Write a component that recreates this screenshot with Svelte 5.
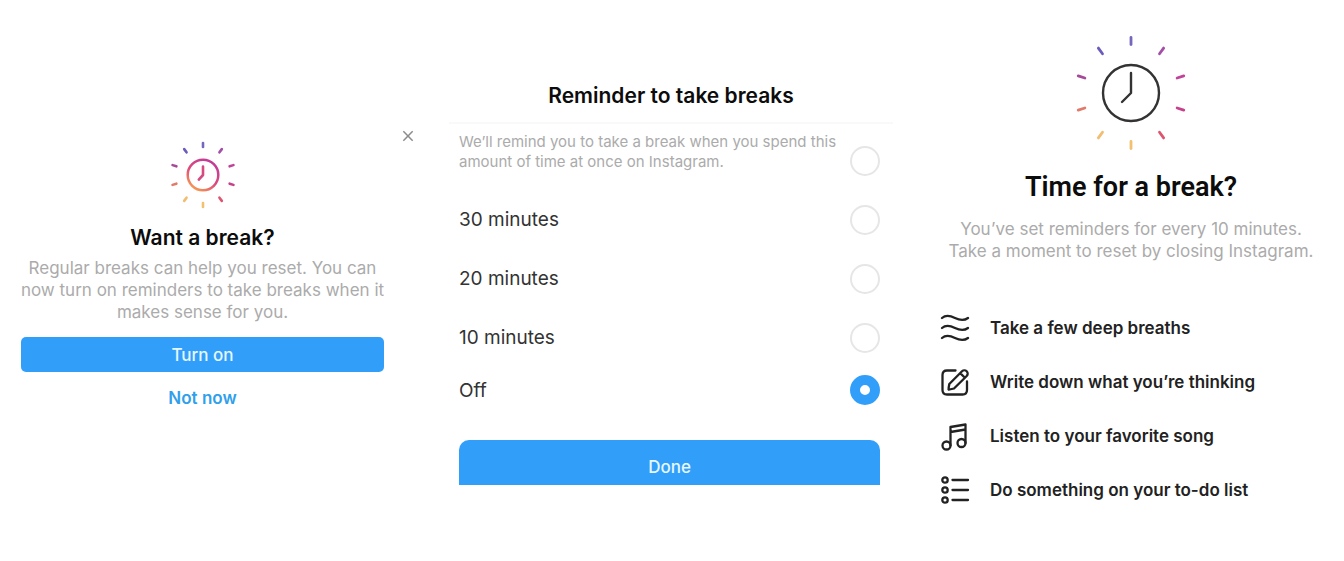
<script>
  // Clockwise from the ray pointing straight up.
  const rayColors = ['#7468bd', '#a34fa8', '#bf4499', '#c7408b', '#dd5570', '#f3c070', '#f1bd70', '#e07a6b', '#a54a98', '#6c5bbd'];
  const options = ['30 minutes', '20 minutes', '10 minutes', 'Off'];
  const ideas = [
    { icon: 'waves', text: 'Take a few deep breaths' },
    { icon: 'pencil', text: 'Write down what you’re thinking' },
    { icon: 'music', text: 'Listen to your favorite song' },
    { icon: 'list', text: 'Do something on your to-do list' }
  ];
  let selected = $state('Off');
</script>

<main>
  <section class="prompt">
    <svg class="sun-small" viewBox="-34 -34 68 68" fill="none" stroke-linecap="round" stroke-linejoin="round" aria-hidden="true">
      <defs>
        <linearGradient id="warm" gradientUnits="userSpaceOnUse" x1="10" y1="-14" x2="-8" y2="15">
          <stop offset="0" stop-color="#c13a98" />
          <stop offset="0.55" stop-color="#dc4a7c" />
          <stop offset="1" stop-color="#f79a52" />
        </linearGradient>
      </defs>
      {#each rayColors as color, i}
        <path d="M0-32V-28" stroke={color} stroke-width="2.6" transform="rotate({i * 36})" />
      {/each}
      <circle r="15.3" stroke="url(#warm)" stroke-width="2.5" />
      <path d="M0-8.5V0L-4.2 4.6" stroke="#d64a82" stroke-width="2.6" />
    </svg>
    <button class="close" aria-label="Close">
      <svg viewBox="0 0 12 12" aria-hidden="true"><path d="M2 2l8 8M10 2l-8 8" stroke="#8c8c8c" stroke-width="1.3" /></svg>
    </button>
    <h2>Want a break?</h2>
    <p>Regular breaks can help you reset. You can now turn on reminders to take breaks when it makes sense for you.</p>
    <button class="primary">Turn on</button>
    <button class="link">Not now</button>
  </section>

  <section class="reminder">
    <h2>Reminder to take breaks</h2>
    <div class="options">
      <label class="option hint">
        <span>We’ll remind you to take a break when you spend this amount of time at once on Instagram.</span>
        <input type="radio" name="reminder" value="custom" bind:group={selected} />
      </label>
      {#each options as option}
        <label class="option" class:last={option === 'Off'}>
          <span>{option}</span>
          <input type="radio" name="reminder" value={option} bind:group={selected} />
        </label>
      {/each}
      <button class="primary done">Done</button>
    </div>
  </section>

  <section class="break">
    <svg class="sun-large" viewBox="-58 -58 116 116" fill="none" stroke-linecap="round" stroke-linejoin="round" aria-hidden="true">
      {#each rayColors as color, i}
        <path d="M0-55.5V-48.5" stroke={color} stroke-width="2.8" transform="rotate({i * 36})" />
      {/each}
      <circle r="28" stroke="#333" stroke-width="2.4" />
      <path d="M0-20V0L-9 9" stroke="#333" stroke-width="2.4" />
    </svg>
    <h1>Time for a break?</h1>
    <p>You’ve set reminders for every 10 minutes. Take a moment to reset by closing Instagram.</p>
    <ul>
      {#each ideas as idea}
        <li>
          <svg viewBox="0 0 30 30" fill="none" stroke="#222" stroke-width="2.3" stroke-linecap="round" stroke-linejoin="round" aria-hidden="true">
            {#if idea.icon === 'waves'}
              {#each [5, 15, 25] as y}
                <path d="M2 {y}C6 {y - 3.5} 10 {y - 2.5} 15 {y}S24 {y + 3} 28 {y}" />
              {/each}
            {:else if idea.icon === 'pencil'}
              <path d="M15.5 3.5H7Q2.500 3.500 2.500 8V23Q2.500 27.500 7 27.500H22.500Q27 27.500 27 23V14.500" />
              <path d="M8.500 21.800L9.300 17L22 4.300A3.300 3.300 0 0 1 26.700 9L14 21.500L9.500 22.500Q8.300 22.800 8.500 21.800ZM20.200 6.100L24.900 10.800" />
            {:else if idea.icon === 'music'}
              <circle cx="6.500" cy="24.500" r="4" />
              <circle cx="21.500" cy="22" r="4" />
              <path d="M10.500 24.500V6L25.500 3.500V22M10.500 11L25.500 8.500" />
            {:else}
              {#each [5, 15, 25] as y}
                <circle cx="5" cy={y} r="2.700" />
                <path d="M12.500 {y}H28" />
              {/each}
            {/if}
          </svg>
          <span>{idea.text}</span>
        </li>
      {/each}
    </ul>
  </section>
</main>

<style>
  :global(body) {
    margin: 0;
    background: #fff;
  }
  main {
    display: grid;
    grid-template-columns: 415fr 444fr 408fr;
    column-gap: 34px;
    align-items: start;
    padding-right: 9px;
    font-family: Inter, "Liberation Sans", sans-serif;
    color: #262626;
  }
  h1, h2, p, ul {
    margin: 0;
    padding: 0;
  }
  h1, h2 {
    color: #0c0c0c;
    text-align: center;
    font-weight: 600;
  }
  button {
    border: 0;
    padding: 0;
    background: none;
    font: inherit;
    cursor: pointer;
  }
  p {
    color: #ababab;
    font-size: 17px;
    line-height: 22px;
    text-align: center;
  }
  .primary {
    background: #319ffa;
    color: #e6f7ff;
    font-size: 17px;
    font-weight: 500;
  }

  .prompt {
    display: grid;
    grid-template-columns: 1fr 31px;
    padding: 129px 0 0 21px;
  }
  .prompt > :not(.close) {
    grid-column: 1;
  }
  .sun-small {
    width: 68px;
    height: 68px;
    margin-top: 12px;
    justify-self: center;
  }
  .close {
    grid-column: 2;
    grid-row: 1;
    width: 14px;
    height: 14px;
    justify-self: end;
    align-self: start;
  }
  .close svg {
    display: block;
    width: 14px;
    height: 14px;
  }
  h2 {
    font-size: 21px;
    line-height: 28px;
  }
  .prompt h2 {
    margin-top: 15px;
  }
  .prompt p {
    margin: 5px -6px 0;
  }
  .prompt .primary {
    height: 35px;
    margin-top: 14px;
    border-radius: 5px;
  }
  .link {
    height: 24px;
    margin-top: 14px;
    justify-self: center;
    color: #319feb;
    font-size: 17px;
    font-weight: 600;
  }

  .reminder {
    padding-top: 82px;
  }
  .reminder h2 {
    padding-bottom: 12px;
    border-bottom: 2px solid #f9f9f9;
  }
  .options {
    display: flex;
    flex-direction: column;
    padding: 7px 13px 0 10px;
  }
  .option {
    display: flex;
    align-items: center;
    justify-content: space-between;
    gap: 12px;
    height: 59px;
    font-size: 19px;
    color: #333;
  }
  .hint {
    color: #ababab;
    font-size: 15px;
    line-height: 20px;
  }
  .hint span {
    align-self: flex-start;
    margin-top: 1px;
  }
  .option.last {
    height: 46px;
  }
  input {
    appearance: none;
    flex: none;
    box-sizing: border-box;
    width: 30px;
    height: 30px;
    margin: 0;
    border: 2px solid #e6e6e6;
    border-radius: 50%;
    background: #fff;
  }
  input:checked {
    border: 10px solid #319ffa;
  }
  .done {
    height: 45px;
    margin-top: 27px;
    padding-top: 9px;
    border-radius: 10px 10px 0 0;
  }

  .break {
    display: flex;
    flex-direction: column;
    padding-top: 35px;
  }
  .sun-large {
    width: 116px;
    height: 116px;
    align-self: center;
  }
  h1 {
    margin-top: 20px;
    font-family: Roboto, Inter, sans-serif;
    font-size: 27px;
    line-height: 32px;
  }
  .break p {
    margin-top: 15px;
    padding: 0 14px;
  }
  ul {
    display: grid;
    gap: 24px;
    margin-top: 51px;
    padding-left: 13px;
    list-style: none;
  }
  li {
    display: flex;
    align-items: center;
    gap: 20px;
    color: #222;
    font-size: 17px;
    font-weight: 600;
  }
  li svg {
    width: 30px;
    height: 30px;
  }
</style>
